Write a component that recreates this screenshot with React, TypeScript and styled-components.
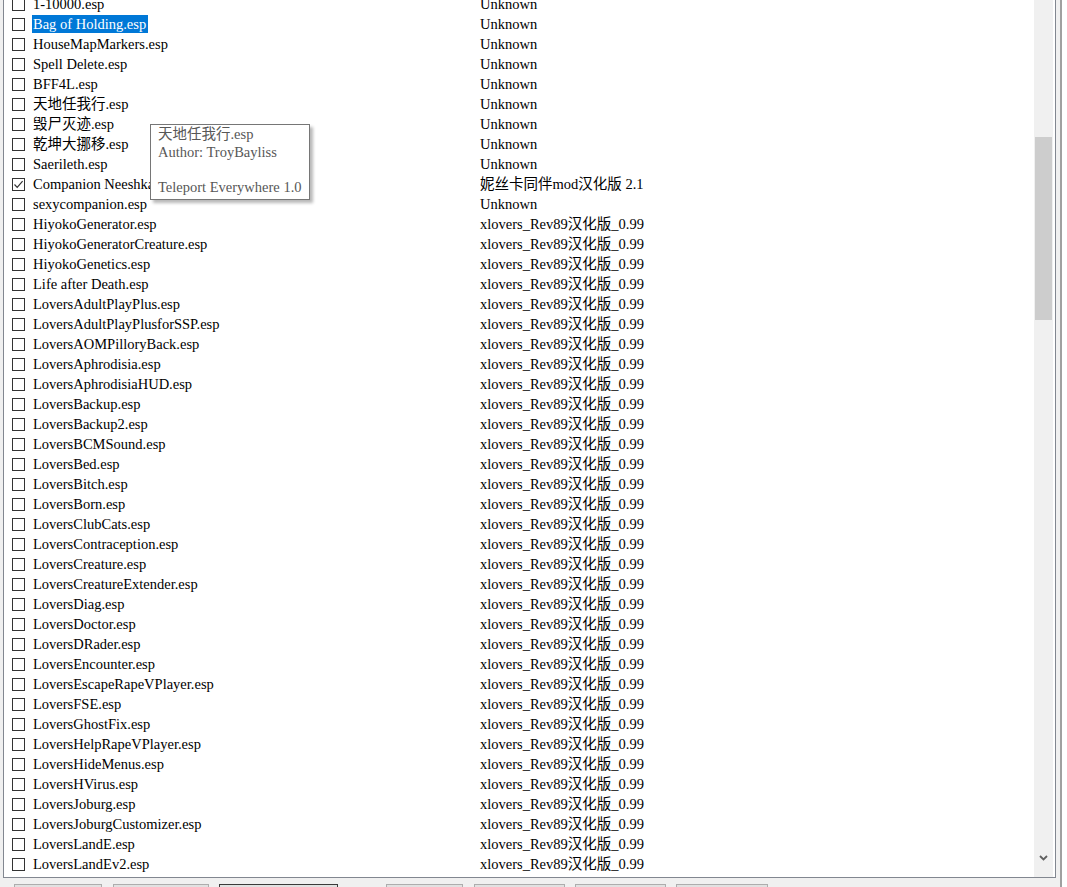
import React from "react";
import styled, { createGlobalStyle } from "styled-components";

const GlobalStyle = createGlobalStyle`
  html, body { margin: 0; padding: 0; background: #ffffff; }
  body { font-family: "Liberation Serif", "Noto Sans CJK SC", serif; }
`;

type Mod = { name: string; version: string; checked?: boolean; selected?: boolean };

const XL = "xlovers_Rev89汉化版_0.99";

const mods: Mod[] = [
  { name: "1-10000.esp", version: "Unknown" },
  { name: "Bag of Holding.esp", version: "Unknown", selected: true },
  { name: "HouseMapMarkers.esp", version: "Unknown" },
  { name: "Spell Delete.esp", version: "Unknown" },
  { name: "BFF4L.esp", version: "Unknown" },
  { name: "天地任我行.esp", version: "Unknown" },
  { name: "毁尸灭迹.esp", version: "Unknown" },
  { name: "乾坤大挪移.esp", version: "Unknown" },
  { name: "Saerileth.esp", version: "Unknown" },
  { name: "Companion Neeshka.esp", version: "妮丝卡同伴mod汉化版 2.1", checked: true },
  { name: "sexycompanion.esp", version: "Unknown" },
  ...[
    "HiyokoGenerator.esp",
    "HiyokoGeneratorCreature.esp",
    "HiyokoGenetics.esp",
    "Life after Death.esp",
    "LoversAdultPlayPlus.esp",
    "LoversAdultPlayPlusforSSP.esp",
    "LoversAOMPilloryBack.esp",
    "LoversAphrodisia.esp",
    "LoversAphrodisiaHUD.esp",
    "LoversBackup.esp",
    "LoversBackup2.esp",
    "LoversBCMSound.esp",
    "LoversBed.esp",
    "LoversBitch.esp",
    "LoversBorn.esp",
    "LoversClubCats.esp",
    "LoversContraception.esp",
    "LoversCreature.esp",
    "LoversCreatureExtender.esp",
    "LoversDiag.esp",
    "LoversDoctor.esp",
    "LoversDRader.esp",
    "LoversEncounter.esp",
    "LoversEscapeRapeVPlayer.esp",
    "LoversFSE.esp",
    "LoversGhostFix.esp",
    "LoversHelpRapeVPlayer.esp",
    "LoversHideMenus.esp",
    "LoversHVirus.esp",
    "LoversJoburg.esp",
    "LoversJoburgCustomizer.esp",
    "LoversLandE.esp",
    "LoversLandEv2.esp",
  ].map((n) => ({ name: n, version: XL })),
];

const buttons = [
  { w: 88, gap: 0 },
  { w: 96, gap: 11 },
  { w: 119, gap: 10, def: true },
  { w: 77, gap: 48 },
  { w: 91, gap: 11 },
  { w: 91, gap: 10 },
  { w: 92, gap: 10 },
];

const Page = styled.div`
  position: relative;
  display: flex;
  height: 887px;
  overflow: hidden;
`;

const Window = styled.div`
  width: 1060px;
  border-right: 2px solid #a0a0a0;
  background: #f0f0f0;
  display: flex;
  flex-direction: column;
`;

const ListBox = styled.div`
  height: 877px;
  margin: 0 4px 0 3px;
  border: 1px solid #828790;
  border-top: none;
  background: #ffffff;
  display: flex;
  overflow: hidden;
  flex-shrink: 0;
`;

const Rows = styled.div`
  flex: 1;
  display: flex;
  flex-direction: column;
  margin-top: -6px;
`;

const Row = styled.div`
  height: 20px;
  flex-shrink: 0;
  display: flex;
  align-items: center;
  padding-left: 8px;
  font-size: 14.5px;
  color: #000;
  white-space: nowrap;
`;

const Check = styled.span`
  width: 11px;
  height: 11px;
  border: 1px solid #333333;
  background: #fff;
  flex-shrink: 0;
  display: flex;
  align-items: center;
  justify-content: center;
`;

const NameCell = styled.div`
  width: 448px;
  padding-left: 7px;
  display: flex;
`;

const Name = styled.span<{ $selected?: boolean }>`
  padding: 0 2px 0 1px;
  line-height: 18px;
  background: ${(p) => (p.$selected ? "#0078d7" : "transparent")};
  color: ${(p) => (p.$selected ? "#ffffff" : "#000000")};
`;

const Version = styled.span`
  line-height: 18px;
`;

const ScrollBar = styled.div`
  width: 19px;
  margin-right: 2px;
  background: #f0f0f0;
  display: flex;
  flex-direction: column;
  flex-shrink: 0;
`;

const Thumb = styled.div<{ $top: number; $height: number }>`
  margin: ${(p) => p.$top}px 1px 0 1px;
  height: ${(p) => p.$height}px;
  background: #cdcdcd;
  flex-shrink: 0;
`;

const TrackRest = styled.div`
  flex: 1;
`;

const ArrowButton = styled.div`
  height: 22px;
  display: flex;
  justify-content: center;
  align-items: flex-start;
  padding-top: 4px;
`;

const ButtonBar = styled.div`
  display: flex;
  padding: 6px 0 0 14px;
`;

const Button = styled.div<{ $w: number; $def?: boolean; $gap: number }>`
  width: ${(p) => p.$w}px;
  height: 23px;
  margin-left: ${(p) => p.$gap}px;
  box-sizing: border-box;
  background: #e1e1e1;
  border: 1px solid ${(p) => (p.$def ? "#3a3a3a" : "#adadad")};
  flex-shrink: 0;
`;

const Tooltip = styled.div`
  position: absolute;
  left: 150px;
  top: 124px;
  width: 160px;
  box-sizing: border-box;
  padding: 1px 8px 3px 7px;
  background: #ffffff;
  border: 1px solid #767676;
  box-shadow: 3px 3px 3px rgba(0, 0, 0, 0.28);
  font-size: 14.5px;
  line-height: 17.5px;
  color: #575757;
  white-space: nowrap;
`;

const TipLine = styled.div`
  height: 17.5px;
`;

const CheckMark = () => (
  <svg width="11" height="11" viewBox="0 0 11 11">
    <path d="M1.5 5.5 L4.2 8.3 L9.6 2.2" fill="none" stroke="#333" strokeWidth="1.2" />
  </svg>
);

const Chevron = () => (
  <svg width="9" height="6" viewBox="0 0 9 6">
    <path d="M1 1 L4.5 4.5 L8 1" fill="none" stroke="#606060" strokeWidth="1.8" />
  </svg>
);

export default function App() {
  return (
    <>
      <GlobalStyle />
      <Page>
        <Window>
          <ListBox>
            <Rows>
              {mods.map((m, i) => (
                <Row key={i}>
                  <Check>{m.checked && <CheckMark />}</Check>
                  <NameCell>
                    <Name $selected={m.selected}>{m.name}</Name>
                  </NameCell>
                  <Version>{m.version}</Version>
                </Row>
              ))}
            </Rows>
            <ScrollBar>
              <Thumb $top={137} $height={183} />
              <TrackRest />
              <ArrowButton>
                <Chevron />
              </ArrowButton>
            </ScrollBar>
          </ListBox>
          <ButtonBar>
            {buttons.map((b, i) => (
              <Button key={i} $w={b.w} $def={b.def} $gap={b.gap} />
            ))}
          </ButtonBar>
        </Window>
        <Tooltip>
          <TipLine>天地任我行.esp</TipLine>
          <TipLine>Author: TroyBayliss</TipLine>
          <TipLine />
          <TipLine>Teleport Everywhere 1.0</TipLine>
        </Tooltip>
      </Page>
    </>
  );
}
